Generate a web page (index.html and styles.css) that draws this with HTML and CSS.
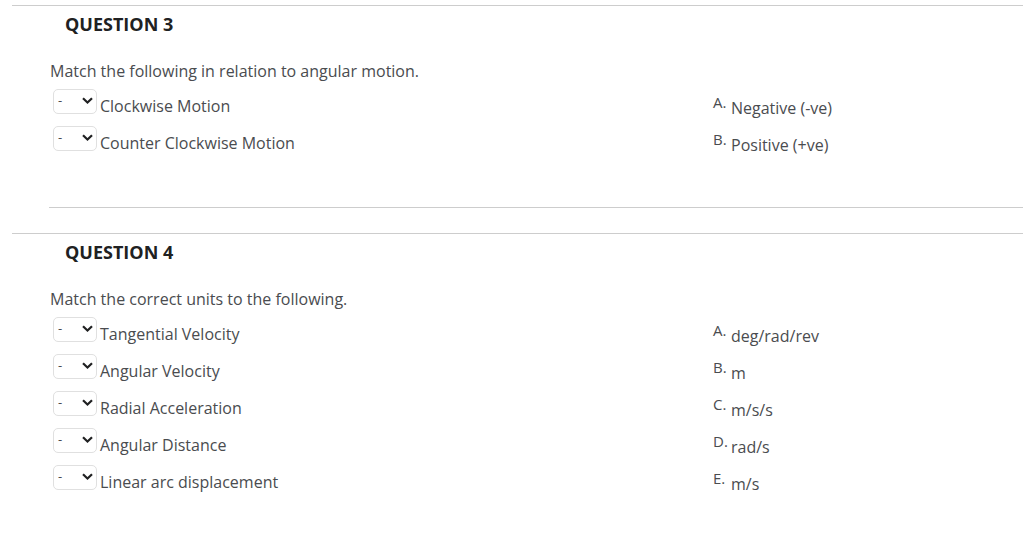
FILE: index.html
```html
<!DOCTYPE html>
<html lang="en">
<head>
    <meta charset="UTF-8">
    <meta name="viewport" content="width=device-width, initial-scale=1.0">
    <title>Quiz - Angular Motion</title>
    <link rel="stylesheet" href="styles.css">
</head>
<body>
    <div class="question">
        <h2>QUESTION 3</h2>
        <div class="qbody">
            <p class="prompt">Match the following in relation to angular motion.</p>
            <div class="match">
                <div class="left">
                    <div class="row">
                        <div class="pick">
                            <select><option>-</option><option>A</option><option>B</option></select>
                            <svg class="chev" width="11" height="7" viewBox="0 0 11 7"><path d="M1 1.2l4.5 4.3 4.5-4.3" fill="none" stroke="#202122" stroke-width="2.2"/></svg>
                        </div>
                        <span class="item">Clockwise Motion</span>
                    </div>
                    <div class="row">
                        <div class="pick">
                            <select><option>-</option><option>A</option><option>B</option></select>
                            <svg class="chev" width="11" height="7" viewBox="0 0 11 7"><path d="M1 1.2l4.5 4.3 4.5-4.3" fill="none" stroke="#202122" stroke-width="2.2"/></svg>
                        </div>
                        <span class="item">Counter Clockwise Motion</span>
                    </div>
                </div>
                <div class="right">
                    <div class="answer"><span class="letter">A.</span>Negative (-ve)</div>
                    <div class="answer"><span class="letter">B.</span>Positive (+ve)</div>
                </div>
            </div>
            <hr class="sep">
        </div>
    </div>

    <div class="question">
        <h2>QUESTION 4</h2>
        <div class="qbody">
            <p class="prompt">Match the correct units to the following.</p>
            <div class="match">
                <div class="left">
                    <div class="row">
                        <div class="pick">
                            <select><option>-</option><option>A</option><option>B</option><option>C</option><option>D</option><option>E</option></select>
                            <svg class="chev" width="11" height="7" viewBox="0 0 11 7"><path d="M1 1.2l4.5 4.3 4.5-4.3" fill="none" stroke="#202122" stroke-width="2.2"/></svg>
                        </div>
                        <span class="item">Tangential Velocity</span>
                    </div>
                    <div class="row">
                        <div class="pick">
                            <select><option>-</option><option>A</option><option>B</option><option>C</option><option>D</option><option>E</option></select>
                            <svg class="chev" width="11" height="7" viewBox="0 0 11 7"><path d="M1 1.2l4.5 4.3 4.5-4.3" fill="none" stroke="#202122" stroke-width="2.2"/></svg>
                        </div>
                        <span class="item">Angular Velocity</span>
                    </div>
                    <div class="row">
                        <div class="pick">
                            <select><option>-</option><option>A</option><option>B</option><option>C</option><option>D</option><option>E</option></select>
                            <svg class="chev" width="11" height="7" viewBox="0 0 11 7"><path d="M1 1.2l4.5 4.3 4.5-4.3" fill="none" stroke="#202122" stroke-width="2.2"/></svg>
                        </div>
                        <span class="item">Radial Acceleration</span>
                    </div>
                    <div class="row">
                        <div class="pick">
                            <select><option>-</option><option>A</option><option>B</option><option>C</option><option>D</option><option>E</option></select>
                            <svg class="chev" width="11" height="7" viewBox="0 0 11 7"><path d="M1 1.2l4.5 4.3 4.5-4.3" fill="none" stroke="#202122" stroke-width="2.2"/></svg>
                        </div>
                        <span class="item">Angular Distance</span>
                    </div>
                    <div class="row">
                        <div class="pick">
                            <select><option>-</option><option>A</option><option>B</option><option>C</option><option>D</option><option>E</option></select>
                            <svg class="chev" width="11" height="7" viewBox="0 0 11 7"><path d="M1 1.2l4.5 4.3 4.5-4.3" fill="none" stroke="#202122" stroke-width="2.2"/></svg>
                        </div>
                        <span class="item">Linear arc displacement</span>
                    </div>
                </div>
                <div class="right">
                    <div class="answer"><span class="letter">A.</span>deg/rad/rev</div>
                    <div class="answer"><span class="letter">B.</span>m</div>
                    <div class="answer"><span class="letter">C.</span>m/s/s</div>
                    <div class="answer"><span class="letter">D.</span>rad/s</div>
                    <div class="answer"><span class="letter">E.</span>m/s</div>
                </div>
            </div>
        </div>
    </div>
</body>
</html>
```

FILE: styles.css
```css
body {
    margin: 0;
    padding: 5px 0 0 0;
    background-color: #ffffff;
    font-family: "Open Sans", "Liberation Sans", sans-serif;
    color: #4a4c4f;
}
.question {
    margin-left: 12px;
    border-top: 1px solid #cdcdcd;
    margin-bottom: 25px;
}
.question h2 {
    margin: 6px 0 0 53px;
    font-size: 18px;
    line-height: 24px;
    font-weight: 700;
    color: #202122;
}
.qbody {
    padding-left: 38px;
}
.prompt {
    margin: 23px 0 5px 0;
    font-size: 16px;
    line-height: 24px;
}
.match {
    display: grid;
    grid-template-columns: 663px 1fr;
}
.left,
.right {
    display: flex;
    flex-direction: column;
    gap: 12px;
}
.row {
    display: flex;
    align-items: flex-start;
    height: 25px;
}
.pick {
    position: relative;
    margin-left: 3px;
    width: 44px;
    height: 25px;
}
.pick select {
    appearance: none;
    -webkit-appearance: none;
    width: 44px;
    height: 25px;
    margin: 0;
    padding: 0 0 2px 4px;
    border: 1px solid #e0e0e0;
    border-radius: 5px;
    background: #ffffff;
    font-family: "Open Sans", "Liberation Sans", sans-serif;
    font-size: 13px;
    color: #494c4e;
}
.chev {
    position: absolute;
    left: 29px;
    top: 9px;
    pointer-events: none;
}
.item {
    margin: 6px 0 0 3px;
    font-size: 16px;
    line-height: 24px;
    white-space: nowrap;
}
.answer {
    height: 25px;
    padding-top: 7px;
    box-sizing: border-box;
    font-size: 16px;
    line-height: 24px;
    white-space: nowrap;
}
.letter {
    display: inline-block;
    width: 18px;
    font-size: 15px;
    vertical-align: 6px;
    line-height: 15px;
}
.sep {
    margin: 57px 0 0 -1px;
    border: none;
    border-top: 1px solid #cdcdcd;
}
```
